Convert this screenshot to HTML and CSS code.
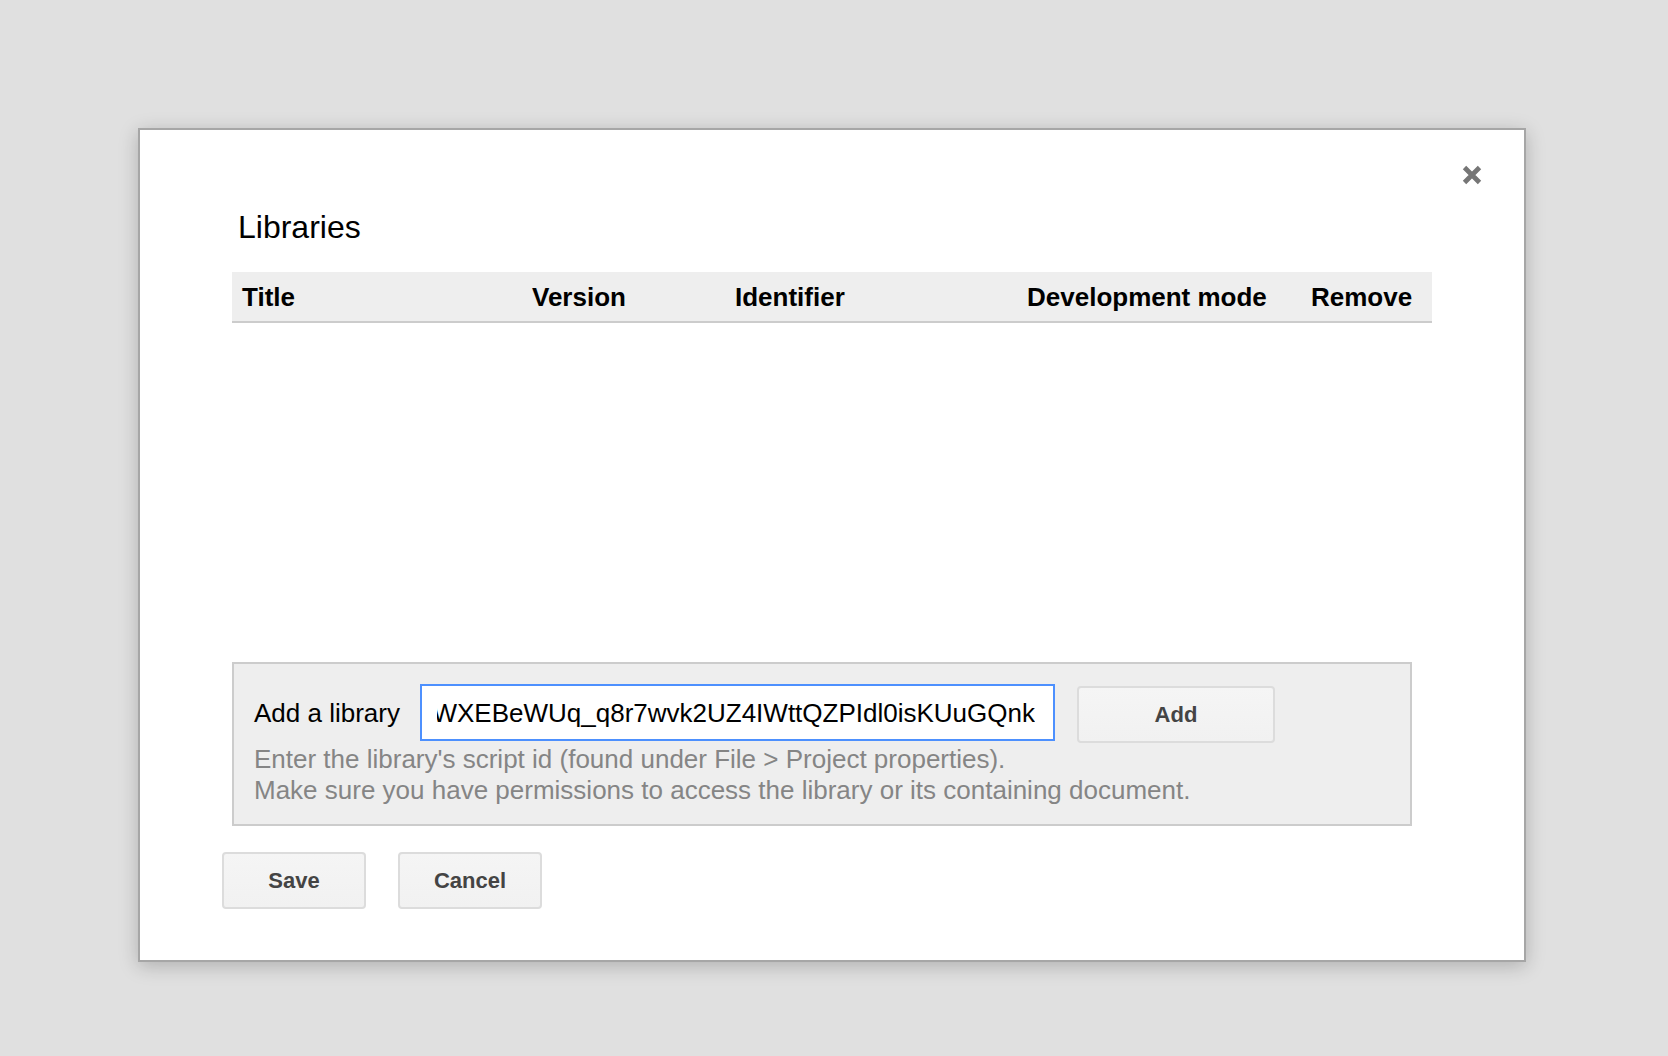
FILE: index.html
```html
<!DOCTYPE html>
<html lang="en">
<head>
<meta charset="utf-8">
<title>Libraries</title>
<link rel="stylesheet" href="styles.css">
</head>
<body>
<div class="dialog">
  <button class="close" aria-label="Close">
    <svg width="22" height="22" viewBox="0 0 22 22"><path d="M3.5 3.5 L18.5 18.5 M18.5 3.5 L3.5 18.5" stroke="#767676" stroke-width="4.8" stroke-linecap="butt" fill="none"/></svg>
  </button>
  <div class="title">Libraries</div>
  <div class="table-head">
    <div class="th">Title</div>
    <div class="th">Version</div>
    <div class="th">Identifier</div>
    <div class="th">Development mode</div>
    <div class="th">Remove</div>
  </div>
  <div class="table-body"></div>
  <div class="add-box">
    <div class="add-row">
      <span class="add-label">Add a library</span>
      <div class="id-input"><div class="id-clip"><span class="id-text">WXEBeWUq_q8r7wvk2UZ4IWttQZPIdl0isKUuGQnk</span></div></div>
      <button class="btn btn-add">Add</button>
    </div>
    <div class="help">Enter the library's script id (found under File &gt; Project properties).<br>Make sure you have permissions to access the library or its containing document.</div>
  </div>
  <div class="actions">
    <button class="btn btn-action">Save</button>
    <button class="btn btn-action">Cancel</button>
  </div>
</div>
</body>
</html>
```

FILE: styles.css
```css
html, body {
  margin: 0;
  padding: 0;
}
body {
  background: #e0e0e0;
  font-family: "Liberation Sans", Arial, sans-serif;
  color: #000;
  height: 1056px;
  overflow: hidden;
}
.dialog {
  position: relative;
  box-sizing: border-box;
  margin: 128px 0 0 138px;
  width: 1388px;
  height: 834px;
  background: #fff;
  border: 2px solid #a6a6a6;
  box-shadow: 0 4px 18px rgba(0, 0, 0, 0.22);
  padding: 79px 92px 0 92px;
}
.close {
  position: absolute;
  top: 34px;
  right: 41px;
  width: 22px;
  height: 22px;
  padding: 0;
  border: 0;
  background: transparent;
  display: block;
  filter: blur(0.6px);
}
.close svg {
  display: block;
}
.title {
  font-size: 32px;
  line-height: 36px;
  height: 36px;
  margin-left: 6px;
}
.table-head {
  margin-top: 27px;
  height: 49px;
  background: #eeeeee;
  border-bottom: 2px solid #cccccc;
  display: grid;
  grid-template-columns: 290px 203px 292px 284px 1fr;
  align-items: center;
}
.th {
  font-size: 26px;
  font-weight: bold;
  padding-left: 10px;
  padding-top: 2px;
  white-space: nowrap;
}
.table-body {
  height: 339px;
}
.add-box {
  box-sizing: border-box;
  width: 1180px;
  height: 164px;
  background: #eeeeee;
  border: 2px solid #cccccc;
  padding: 20px 20px 0 20px;
}
.add-row {
  display: flex;
  align-items: flex-start;
  height: 57px;
}
.add-label {
  align-self: center;
  font-size: 26px;
  padding-top: 2px;
  margin-right: 20px;
  white-space: nowrap;
}
.id-input {
  box-sizing: border-box;
  width: 635px;
  height: 57px;
  background: #fff;
  border: 2px solid #4d90fe;
  padding: 2px 18px 0 15px;
  display: flex;
  align-items: center;
}
.id-clip {
  flex: 1;
  overflow: hidden;
  display: flex;
  justify-content: flex-end;
}
.id-text {
  flex-shrink: 0;
  font-size: 26px;
  white-space: nowrap;
  color: #000;
}
.btn {
  box-sizing: border-box;
  height: 57px;
  border: 2px solid #dcdcdc;
  border-radius: 4px;
  background: linear-gradient(#f5f5f5, #f1f1f1);
  color: #444;
  font-family: "Liberation Sans", Arial, sans-serif;
  font-size: 22px;
  font-weight: bold;
  padding: 0;
}
.btn-add {
  width: 198px;
  margin-left: 22px;
  margin-top: 2px;
}
.help {
  margin-top: 3px;
  font-size: 26px;
  line-height: 31px;
  color: #858585;
  white-space: nowrap;
}
.actions {
  display: flex;
  gap: 32px;
  margin-top: 26px;
  margin-left: -10px;
}
.btn-action {
  width: 144px;
}
```
